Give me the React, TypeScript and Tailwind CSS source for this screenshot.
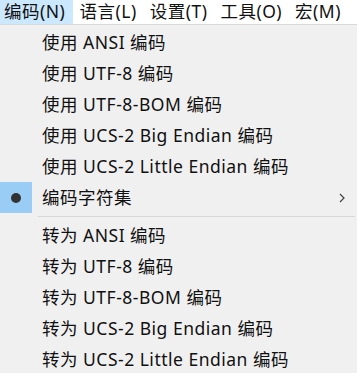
const font = { fontFamily: '"Noto Sans", "Noto Sans CJK SC", sans-serif' }

const topItems = ["编码(N)", "语言(L)", "设置(T)", "工具(O)", "宏(M)"]

const useItems = [
  "使用 ANSI 编码",
  "使用 UTF-8 编码",
  "使用 UTF-8-BOM 编码",
  "使用 UCS-2 Big Endian 编码",
  "使用 UCS-2 Little Endian 编码",
]

const convItems = [
  "转为 ANSI 编码",
  "转为 UTF-8 编码",
  "转为 UTF-8-BOM 编码",
  "转为 UCS-2 Big Endian 编码",
  "转为 UCS-2 Little Endian 编码",
]

function Row({ label }: { label: string }) {
  return (
    <div className="flex h-[31px] items-center pt-px">
      <div className="w-[42px] shrink-0" />
      <span>{label}</span>
    </div>
  )
}

export default function App() {
  return (
    <div
      className="h-[378px] w-[357px] overflow-hidden bg-white text-[17.5px] leading-none tracking-[0.5px] text-[#111]"
      style={font}
    >
      {/* menu bar */}
      <div className="flex h-[25px] items-center border-b border-[#d9d9d9]">
        {topItems.map((t, i) => (
          <div
            key={t}
            className={`flex h-full items-center ${i === 0 ? "w-[73px] bg-[#cce8ff] pl-[4px]" : "px-[6.5px]"}`}
          >
            {t}
          </div>
        ))}
      </div>

      {/* dropdown */}
      <div className="h-[348px] bg-[#f0f0f0] pt-[2px]">
        {useItems.map((t) => (
          <Row key={t} label={t} />
        ))}
        <div className="flex h-[31px] items-center">
          <div className="flex h-[31px] w-[32px] shrink-0 items-center justify-center bg-[#99cdf5]">
            <div className="h-[10px] w-[10px] rounded-full bg-[#333]" />
          </div>
          <div className="w-[10px] shrink-0" />
          <span className="flex-1 pt-px">编码字符集</span>
          <svg width="8" height="12" viewBox="0 0 8 12" className="mr-[11px]">
            <path d="M2 2 L6 6 L2 10" fill="none" stroke="#444" strokeWidth="1.2" />
          </svg>
        </div>
        <div className="flex h-[7px] items-center pl-[38px] pr-[2px]">
          <div className="h-px w-full bg-[#d7d7d7]" />
        </div>
        {convItems.map((t) => (
          <Row key={t} label={t} />
        ))}
      </div>
    </div>
  )
}
